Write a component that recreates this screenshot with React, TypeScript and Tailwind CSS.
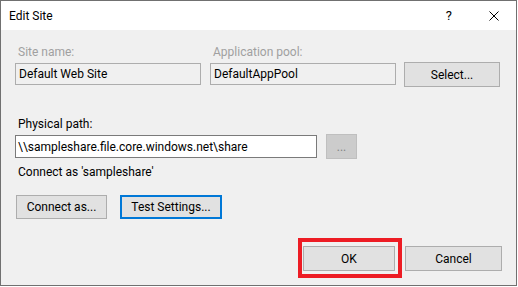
const font = { fontFamily: 'Roboto, "Noto Sans", sans-serif' };

const Btn = ({
  label,
  className = "",
}: {
  label: string;
  className?: string;
}) => (
  <button
    type="button"
    className={`flex h-[24px] items-center justify-center bg-[#e1e1e1] text-[12px] text-black ${className}`}
  >
    {label}
  </button>
);

const App = () => {
  return (
    <div className="h-[287px] w-[518px] bg-white text-[12px] leading-[16px] text-black" style={font}>
      <div className="flex h-[286px] w-[517px] flex-col border border-[#707070]">
        {/* title bar */}
        <div className="flex h-[29px] shrink-0 items-center bg-white pl-[8px] pr-[17px]">
          <span>Edit Site</span>
          <span className="ml-auto mr-[37px] text-[13px]">?</span>
          <svg width="10" height="10" viewBox="0 0 10 10" className="mt-[1px]">
            <path d="M0.5 0.5 L9.5 9.5 M9.5 0.5 L0.5 9.5" stroke="#000" strokeWidth="1" />
          </svg>
        </div>

        <div className="flex flex-1 flex-col bg-[#f0f0f0] px-[14px] pt-[14px]">
          {/* site + pool */}
          <div className="flex items-end">
            <div className="flex w-[186px] flex-col">
              <span className="pl-[3px] text-[#a0a0a0]">Site name:</span>
              <div className="mt-[3px] flex h-[22px] items-center border border-[#adadad] bg-[#f0f0f0] pl-[3px]">
                Default Web Site
              </div>
            </div>
            <div className="ml-[9px] flex w-[186px] flex-col">
              <span className="pl-[3px] text-[#a0a0a0]">Application pool:</span>
              <div className="mt-[3px] flex h-[22px] items-center border border-[#adadad] bg-[#f0f0f0] pl-[3px]">
                DefaultAppPool
              </div>
            </div>
            <Btn label="Select..." className="-mb-[2px] ml-[8px] h-[25px] w-[96px] border border-[#adadad]" />
          </div>

          {/* physical path */}
          <span className="mt-[31px] pl-[3px]">Physical path:</span>
          <div className="mt-[2px] flex items-center">
            <div className="flex h-[23px] w-[302px] items-center border border-[#7a7a7a] bg-white pl-[2px]">
              \\sampleshare.file.core.windows.net\share
            </div>
            <div className="ml-[9px] flex h-[25px] w-[31px] items-center justify-center border border-[#bfbfbf] bg-[#cccccc] text-[#838383]">
              ...
            </div>
          </div>
          <span className="mt-[5px] pl-[3px]">Connect as 'sampleshare'</span>

          <div className="ml-[1px] mt-[15px] flex gap-[13px]">
            <Btn label="Connect as..." className="w-[91px] border border-[#adadad]" />
            <Btn label="Test Settings..." className="w-[102px] border-2 border-[#0078d7]" />
          </div>

          {/* footer */}
          <div className="mt-[27px] flex justify-end gap-[10px]">
            <div className="relative">
              <Btn label="OK" className="h-[25px] w-[92px] border border-[#adadad]" />
              <span className="pointer-events-none absolute -bottom-[7px] -left-[5px] -right-[7px] -top-[8px] border-4 border-[#ed1c24]" />
            </div>
            <Btn label="Cancel" className="h-[25px] w-[97px] border border-[#adadad]" />
          </div>
        </div>
      </div>
    </div>
  );
};

export default App;
